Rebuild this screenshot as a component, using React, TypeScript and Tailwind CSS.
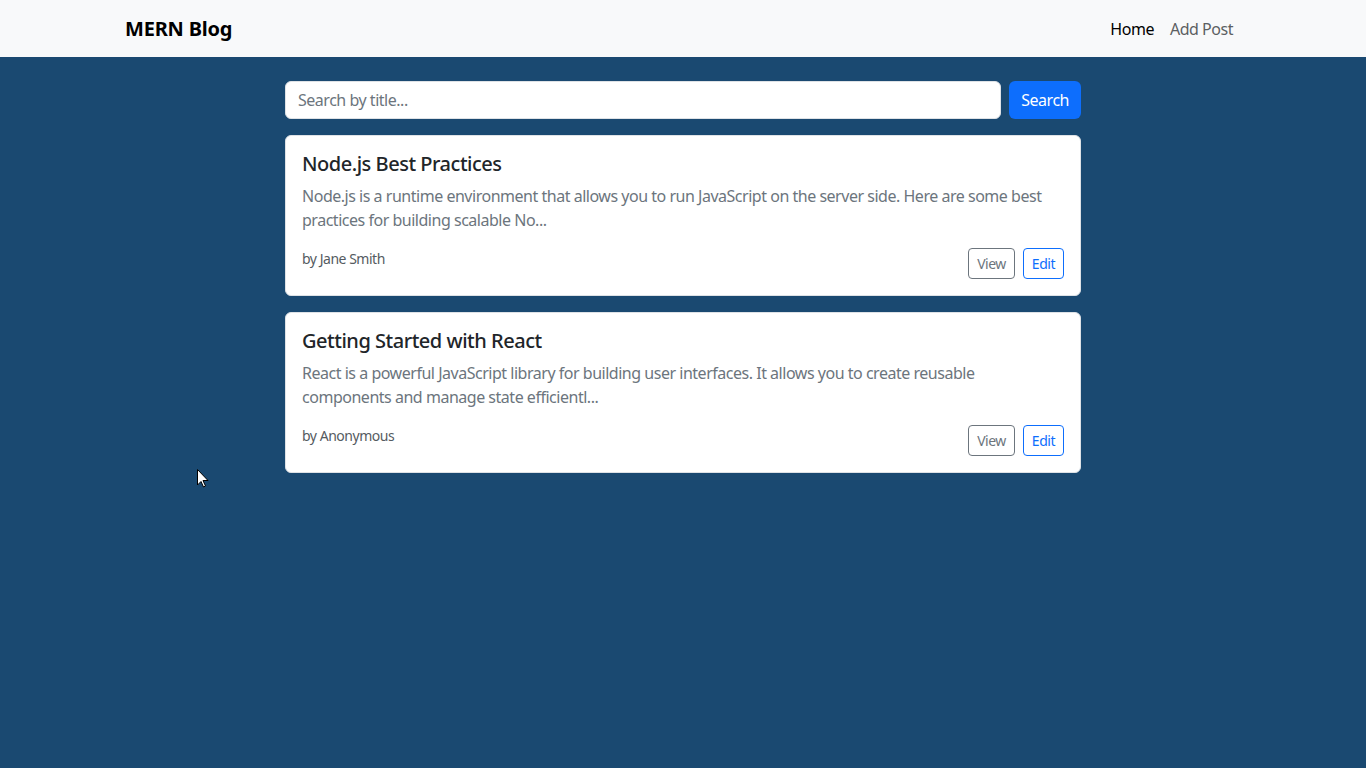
import React from "react";

type Post = {
  title: string;
  excerpt: string;
  author: string;
};

const posts: Post[] = [
  {
    title: "Node.js Best Practices",
    excerpt:
      "Node.js is a runtime environment that allows you to run JavaScript on the server side. Here are some best practices for building scalable No...",
    author: "Jane Smith",
  },
  {
    title: "Getting Started with React",
    excerpt:
      "React is a powerful JavaScript library for building user interfaces. It allows you to create reusable components and manage state efficientl...",
    author: "Anonymous",
  },
];

const PostCard: React.FC<{ post: Post }> = ({ post }) => {
  return (
    <div className="bg-white border border-[#dee2e6] rounded-[6px] p-4">
      <h5 className="text-[20px] leading-[24px] font-medium text-[#212529] mb-2">{post.title}</h5>
      <p className="text-[16px] leading-[24px] text-[#6c757d] mb-4">{post.excerpt}</p>
      <div className="flex justify-between items-start">
        <small className="text-[14px] leading-[21px] text-[#555b61]">by {post.author}</small>
        <div className="flex gap-2">
          <button className="h-[31px] px-2 text-[14px] border border-[#6c757d] text-[#6c757d] rounded-[4px] bg-white">
            View
          </button>
          <button className="h-[31px] px-2 text-[14px] border border-[#0d6efd] text-[#0d6efd] rounded-[4px] bg-white">
            Edit
          </button>
        </div>
      </div>
    </div>
  );
};

export default function App() {
  return (
    <div className="relative min-h-[768px] bg-[#1a4971] font-['Noto_Sans','Open_Sans',sans-serif] tracking-[-0.03em]">
      <nav className="h-[57px] bg-[#f8f9fa]">
        <div className="w-[1140px] mx-auto px-3 h-full flex items-center justify-between">
          <span className="text-[20px] font-bold text-black tracking-[-0.01em]">MERN Blog</span>
          <div className="flex text-[16px]">
            <a className="px-2 text-black">Home</a>
            <a className="px-2 text-[#5c5f62]">Add Post</a>
          </div>
        </div>
      </nav>

      <main className="w-[796px] mx-auto pt-6">
        <div className="flex gap-2 mb-4">
          <input
            className="flex-1 h-[38px] px-3 bg-white border border-[#dee2e6] rounded-[6px] text-[16px] tracking-[-0.03em] placeholder:text-[#6c757d] outline-none"
            placeholder="Search by title..."
          />
          <button className="h-[38px] px-3 bg-[#0d6efd] text-white text-[16px] rounded-[6px]">Search</button>
        </div>
        <div className="flex flex-col gap-4">
          {posts.map((p) => (
            <PostCard key={p.title} post={p} />
          ))}
        </div>
      </main>

      {/* mouse pointer seen in the capture */}
      <svg className="absolute left-[197px] top-[469px]" width="12" height="19" viewBox="0 0 12 19">
        <path d="M0.5 0.5 L0.5 16 L4 12.5 L6.5 18 L8.5 17 L6 11.5 L11 11.5 Z" fill="white" stroke="black" strokeWidth="1" />
      </svg>
    </div>
  );
}
